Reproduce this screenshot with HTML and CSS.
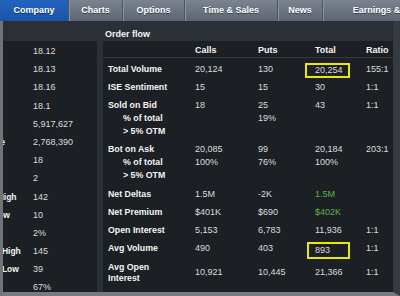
FILE: index.html
```html
<!DOCTYPE html>
<html lang="en">
<head>
    <meta charset="UTF-8">
    <title>Order flow</title>
    <link rel="stylesheet" href="styles.css">
</head>
<body>
    <!-- Tabs -->
    <nav class="tabs">
        <a href="#" class="tab tab-company active">Company</a>
        <a href="#" class="tab tab-charts">Charts</a>
        <a href="#" class="tab tab-options">Options</a>
        <a href="#" class="tab tab-sales">Time &amp; Sales</a>
        <a href="#" class="tab tab-news">News</a>
        <a href="#" class="tab tab-earnings">Earnings &amp; Estimates</a>
    </nav>

    <main class="main">
        <!-- Quote panel (scrolled sideways) -->
        <section class="quote">
            <div class="qrow"><span class="k"></span><span class="v">18.12</span></div>
            <div class="qrow"><span class="k"></span><span class="v">18.13</span></div>
            <div class="qrow"><span class="k"></span><span class="v">18.16</span></div>
            <div class="qrow"><span class="k"></span><span class="v">18.1</span></div>
            <div class="qrow"><span class="k"></span><span class="v">5,917,627</span></div>
            <div class="qrow"><span class="k">Volume</span><span class="v">2,768,390</span></div>
            <div class="qrow"><span class="k"></span><span class="v">18</span></div>
            <div class="qrow"><span class="k"></span><span class="v">2</span></div>
            <div class="qrow"><span class="k">Days High</span><span class="v">142</span></div>
            <div class="qrow"><span class="k">Day Low</span><span class="v">10</span></div>
            <div class="qrow"><span class="k"></span><span class="v">2%</span></div>
            <div class="qrow"><span class="k">52 Wk High</span><span class="v">145</span></div>
            <div class="qrow"><span class="k">52 Wk Low</span><span class="v">39</span></div>
            <div class="qrow"><span class="k"></span><span class="v">67%</span></div>
        </section>

        <!-- Order flow -->
        <section class="flow">
            <div class="flow-title">Order flow</div>
            <div class="flow-table">
                <div class="thead">
                    <span></span><span>Calls</span><span>Puts</span><span>Total</span><span>Ratio</span>
                </div>
                <div class="tbody">
                    <div class="row">
                        <span class="k">Total Volume</span><span>20,124</span><span>130</span>
                        <span><span class="hl">20,254</span></span><span>155:1</span>
                    </div>
                    <div class="row">
                        <span class="k">ISE Sentiment</span><span>15</span><span>15</span><span>30</span><span>1:1</span>
                    </div>
                    <div class="row">
                        <span class="k">Sold on Bid</span><span>18</span><span>25</span><span>43</span><span>1:1</span>
                        <span class="k sub">% of total</span><span></span><span>19%</span><span></span><span></span>
                        <span class="k sub">&gt; 5% OTM</span><span></span><span></span><span></span><span></span>
                    </div>
                    <div class="row">
                        <span class="k">Bot on Ask</span><span>20,085</span><span>99</span><span>20,184</span><span>203:1</span>
                        <span class="k sub">% of total</span><span>100%</span><span>76%</span><span>100%</span><span></span>
                        <span class="k sub">&gt; 5% OTM</span><span></span><span></span><span></span><span></span>
                    </div>
                    <div class="row">
                        <span class="k">Net Deltas</span><span>1.5M</span><span>-2K</span><span class="pos">1.5M</span><span></span>
                    </div>
                    <div class="row">
                        <span class="k">Net Premium</span><span>$401K</span><span>$690</span><span class="pos">$402K</span><span></span>
                    </div>
                    <div class="row">
                        <span class="k">Open Interest</span><span>5,153</span><span>6,783</span><span>11,936</span><span>1:1</span>
                    </div>
                    <div class="row">
                        <span class="k">Avg Volume</span><span>490</span><span>403</span>
                        <span><span class="hl hl-short">893</span></span><span>1:1</span>
                    </div>
                    <div class="row row-tall">
                        <span class="k">Avg Open<br>Interest</span><span>10,921</span><span>10,445</span><span>21,366</span><span>1:1</span>
                    </div>
                </div>
            </div>
        </section>
    </main>
</body>
</html>
```

FILE: styles.css
```css
:root {
    --bar-top: #7a838f;
    --bar-bottom: #5c6571;
    --tab-blue: #1e5bb4;
    --frame-bg: #2b3037;
    --panel-bg: #1c1f24;
    --edge-gray: #6f747a;
    --text-label: #f4f4f4;
    --text-value: #dcdcdc;
    --green: #62b04a;
    --mark: #eaea00;
}

body {
    margin: 0;
    width: 400px;
    height: 296px;
    overflow: hidden;
    background-color: var(--frame-bg);
    font-family: "Liberation Sans", Arial, sans-serif;
    display: flex;
    flex-direction: column;
}

/* Tabs */
.tabs {
    flex: none;
    display: flex;
    height: 21px;
    overflow: hidden;
    white-space: nowrap;
    background: linear-gradient(var(--bar-top), var(--bar-bottom));
}

.tab {
    flex: none;
    box-sizing: border-box;
    text-align: center;
    line-height: 21px;
    font-size: 9px;
    font-weight: bold;
    color: #fff;
    text-decoration: none;
    text-shadow: 0 1px 0 rgba(0, 0, 0, 0.45);
    border-right: 1px solid #4c545f;
    box-shadow: inset 1px 0 0 #8b939d;
}

.tab.active {
    background: linear-gradient(#2263be, #1a54aa);
    box-shadow: none;
}

.tab-company { width: 69px; }
.tab-charts { width: 54px; }
.tab-options { width: 62px; }
.tab-sales { width: 93px; }
.tab-news { width: 45px; }
.tab-earnings { width: 153px; }

/* Main frame */
.main {
    flex: 1;
    display: flex;
    border-left: 3px solid var(--edge-gray);
    border-right: 7px solid #363b42;
    border-bottom: 4px solid #777b81;
    min-height: 0;
}

/* Quote panel on the left */
.quote {
    flex: none;
    width: 94px;
    margin-top: 20px;
    padding-top: 1px;
    background-color: var(--panel-bg);
    overflow: hidden;
}

.qrow {
    display: flex;
    height: 18.2px;
    line-height: 18.2px;
    white-space: nowrap;
    margin-left: -28px;
}

.qrow .k {
    flex: none;
    width: 58px;
    font-size: 8.5px;
    font-weight: bold;
    color: var(--text-label);
}

.qrow .v {
    font-size: 9px;
    color: var(--text-value);
}

/* Order flow */
.flow {
    flex: 1;
    margin-left: 6px;
    display: flex;
    flex-direction: column;
}

.flow-title {
    height: 20px;
    box-sizing: border-box;
    padding: 7px 0 0 2px;
    line-height: 13px;
    font-size: 9px;
    font-weight: bold;
    color: var(--text-label);
}

.flow-table {
    flex: 1;
    background-color: var(--panel-bg);
    padding-left: 5px;
}

.thead,
.row {
    display: grid;
    grid-template-columns: 87px 63px 57px 51px 1fr;
    white-space: nowrap;
}

.thead {
    height: 17px;
    box-sizing: border-box;
    padding-top: 3px;
    line-height: 13px;
    font-size: 9px;
    font-weight: bold;
    color: var(--text-label);
    border-bottom: 1px solid #343940;
    margin-left: -5px;
    padding-left: 5px;
}

.tbody {
    padding-top: 2.2px;
}

.row {
    grid-auto-rows: 13px;
    padding: 2.6px 0;
    line-height: 13px;
    font-size: 9px;
    color: var(--text-value);
}

.row .k {
    font-size: 8.8px;
    font-weight: bold;
    color: var(--text-label);
}

.row .sub {
    padding-left: 15px;
}

.row .pos {
    color: var(--green);
}

.row-tall {
    grid-auto-rows: auto;
    align-items: center;
    padding: 4.2px 0 0;
}

.row-tall .k {
    line-height: 10.7px;
}

/* Yellow marks round the figures */
.hl {
    display: inline-block;
    line-height: 11px;
    padding: 0 5px 0 8px;
    margin-left: -10px;
    border: 2px solid var(--mark);
}

.hl-short {
    line-height: 13px;
    padding: 0 18px 0 6px;
    margin-left: -8px;
}
```
